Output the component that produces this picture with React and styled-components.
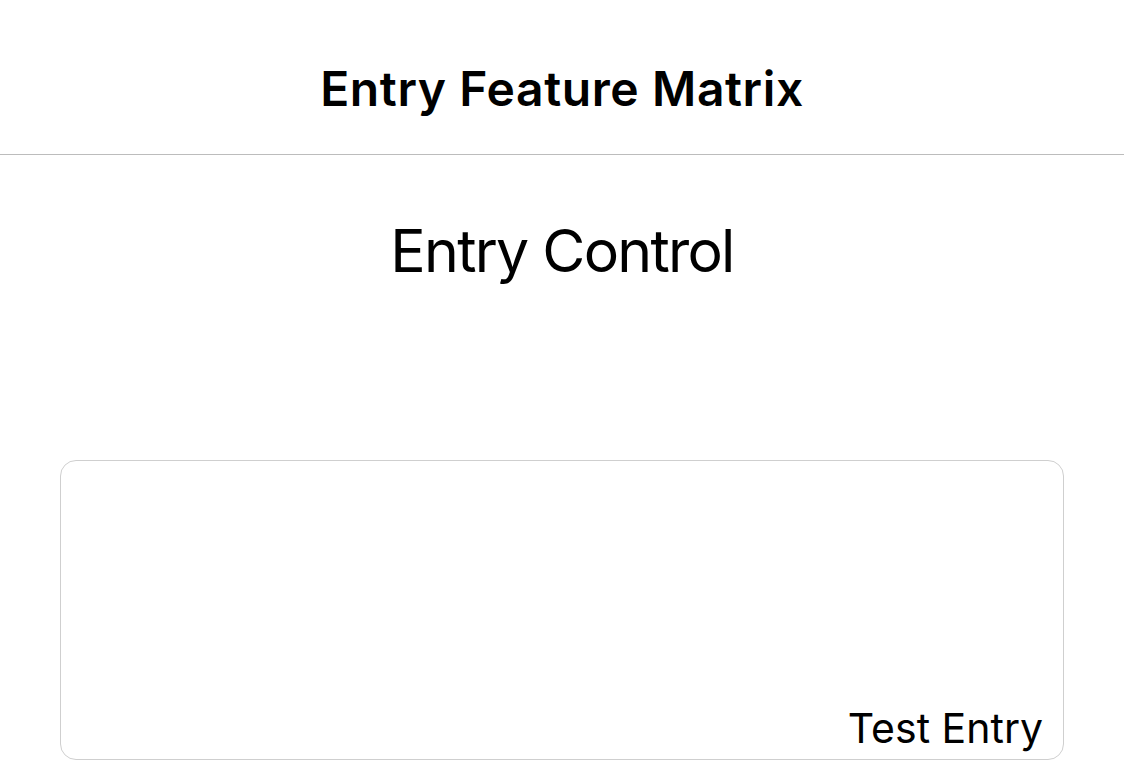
import React from 'react';
import styled, {createGlobalStyle} from 'styled-components';

const GlobalStyle = createGlobalStyle`
	html, body {
		margin: 0;
		padding: 0;
		background: #ffffff;
		font-family: Inter, 'Noto Sans', sans-serif;
		color: #000000;
	}
`;

const Page = styled.div`
	width: 1124px;
	height: 776px;
	overflow: hidden;
	display: flex;
	flex-direction: column;
	background: #ffffff;
`;

const NavBar = styled.header`
	height: 155px;
	display: flex;
	align-items: center;
	justify-content: center;
	border-bottom: 1px solid #bcbcbc;
	box-sizing: border-box;
	padding-top: 24px;
`;

const NavTitle = styled.h1`
	margin: 0;
	font-size: 48px;
	font-weight: 600;
	line-height: 58px;
	letter-spacing: 0.6px;
`;

const Content = styled.main`
	flex: 1;
	display: flex;
	flex-direction: column;
	align-items: center;
	padding: 56px 60px 0;
`;

const SectionTitle = styled.h2`
	margin: 0;
	font-size: 59px;
	font-weight: 400;
	line-height: 80px;
	letter-spacing: -1.75px;
`;

const EntryBox = styled.div`
	margin-top: 169px;
	align-self: stretch;
	height: 300px;
	border: 1px solid #cfcfcf;
	border-radius: 16px;
	display: flex;
	align-items: flex-end;
	justify-content: flex-end;
	padding: 0 20px 6px;
	box-sizing: border-box;
`;

const EntryText = styled.span`
	font-size: 41px;
	font-weight: 400;
	line-height: 50px;
`;

export default function App() {
	return (
		<Page>
			<GlobalStyle />
			<NavBar>
				<NavTitle>Entry Feature Matrix</NavTitle>
			</NavBar>
			<Content>
				<SectionTitle>Entry Control</SectionTitle>
				<EntryBox>
					<EntryText>Test Entry</EntryText>
				</EntryBox>
			</Content>
		</Page>
	);
}
